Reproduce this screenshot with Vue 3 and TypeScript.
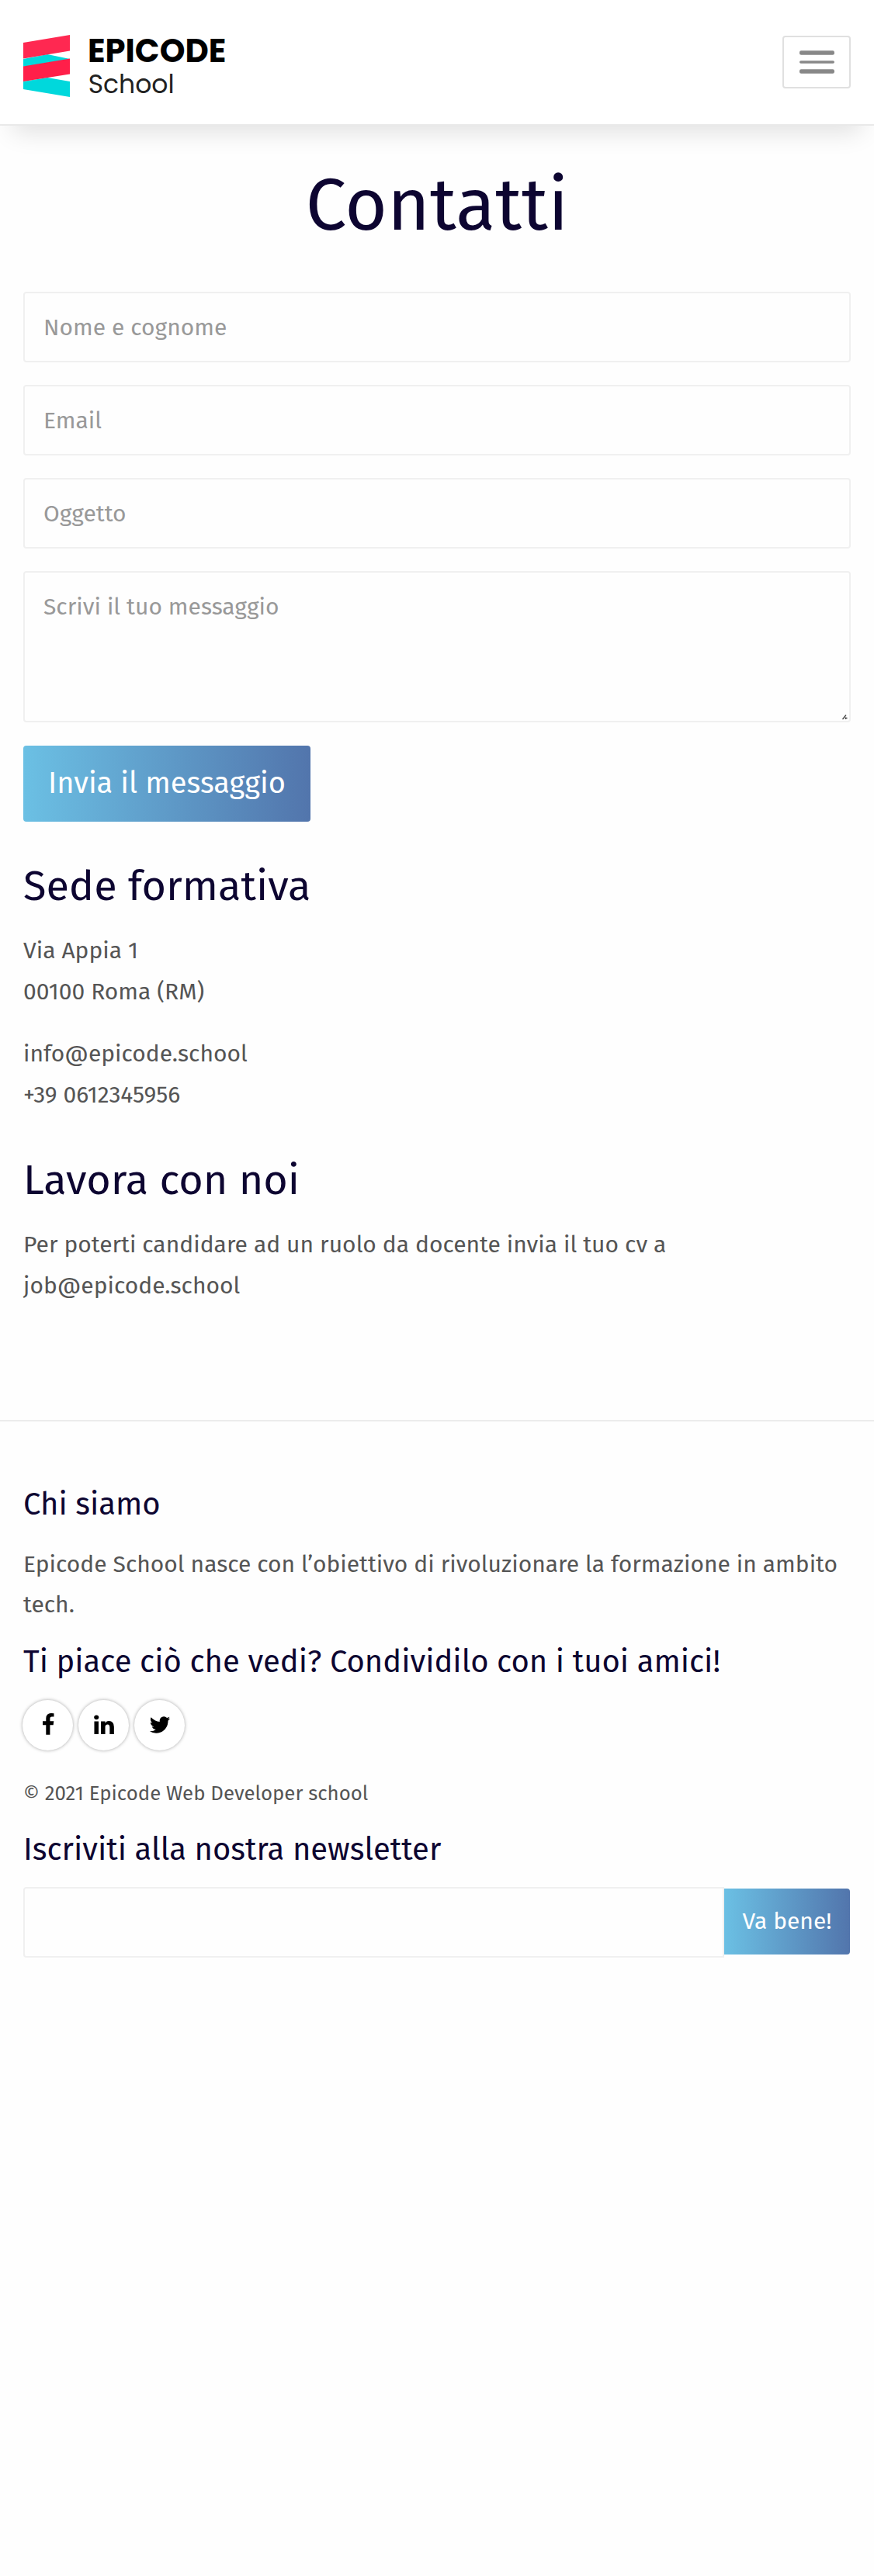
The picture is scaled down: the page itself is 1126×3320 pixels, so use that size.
<script setup lang="ts">
interface Field { name: string; label: string; type: string }
interface Social { name: string; path: string }

const fields: Field[] = [
  { name: 'nome', label: 'Nome e cognome', type: 'text' },
  { name: 'email', label: 'Email', type: 'email' },
  { name: 'oggetto', label: 'Oggetto', type: 'text' },
]

const socials: Social[] = [
  {
    name: 'Facebook',
    path: 'M1343 12v264h-157q-86 0-116 36t-30 108v189h293l-39 296h-254v759h-306v-759h-255v-296h255v-218q0-186 104-288.500t277-102.500q147 0 228 12z',
  },
  {
    name: 'LinkedIn',
    path: 'M477 625v991h-330v-991h330zm21-306q1 73-50.500 122t-135.500 49h-2q-82 0-132-49t-50-122q0-74 51.500-122.500t134.500-48.500 133 48.500 51 122.500zm1166 729v568h-329v-530q0-105-40.500-164.500t-126.500-59.500q-63 0-105.500 34.500t-63.500 85.500q-11 30-11 81v553h-329q2-399 2-647t-1-296l-1-48h329v144h-2q20-32 41-56t56.500-52 87-43.500 114.500-15.500q171 0 275 113.500t104 332.500z',
  },
  {
    name: 'Twitter',
    path: 'M1684 408q-67 98-162 167 1 14 1 42 0 130-38 259.500t-115.500 248.500-184.500 210.500-258 146-323 54.500q-271 0-496-145 35 4 78 4 225 0 401-138-105-2-188-64.500t-114-159.500q33 5 61 5 43 0 85-11-112-23-185.500-111.500t-73.500-205.500v-4q68 38 146 41-66-44-105-115t-39-154q0-88 44-163 121 149 294.500 238.500t371.500 99.500q-8-38-8-74 0-134 94.500-228.500t228.500-94.500q140 0 236 102 109-21 205-78-37 115-142 178 93-10 186-50z',
  },
]
</script>

<template>
  <div class="page">
    <header class="header">
      <a class="brand">
        <svg class="mark" viewBox="0 0 60 80" aria-hidden="true">
          <path d="M0 31 L31 25 L60 31 L60 36 L0 41Z" fill="#00d8dc" />
          <path d="M0 60 L31 55 L60 60 V80 L0 70Z" fill="#00d8dc" />
          <path d="M0 10 L60 0 V20.500 L0 30.500Z" fill="#ff2851" />
          <path d="M0 40.500 L60 30.500 V50.500 L0 60Z" fill="#ff1f49" />
        </svg>
        <span class="wordmark">
          <strong>EPICODE</strong>
          <span>School</span>
        </span>
      </a>
      <button class="toggler" aria-label="Menu">
        <svg width="45" height="30" viewBox="0 0 45 30">
          <rect y="0.300" width="45" height="5.400" rx="2.200" />
          <rect y="13.200" width="45" height="3.600" rx="1.800" />
          <rect y="24.300" width="45" height="5.400" rx="2.200" />
        </svg>
      </button>
    </header>

    <main class="main">
      <h1>Contatti</h1>
      <form class="form">
        <input v-for="f in fields" :key="f.name" class="control" :type="f.type" :name="f.name" :placeholder="f.label" />
        <div class="area-wrap">
          <textarea class="control area" name="messaggio" placeholder="Scrivi il tuo messaggio"></textarea>
          <svg class="grip" width="7" height="7" viewBox="0 0 7 7" aria-hidden="true">
            <path d="M0.500 6 L5 0.500 M4 4.500 H6.500 M4.500 3.500 V6" />
          </svg>
        </div>
        <button class="btn send" type="button">Invia il messaggio</button>
      </form>

      <section class="place">
        <h2>Sede formativa</h2>
        <p>Via Appia 1<br />00100 Roma (RM)</p>
        <p>info@epicode.school<br />+39 0612345956</p>
      </section>
      <section class="jobs">
        <h2>Lavora con noi</h2>
        <p>Per poterti candidare ad un ruolo da docente invia il tuo cv a<br />job@epicode.school</p>
      </section>
    </main>

    <footer class="footer">
      <h5>Chi siamo</h5>
      <p>Epicode School nasce con l’obiettivo di rivoluzionare la formazione in ambito tech.</p>
      <h5 class="share">Ti piace ciò che vedi? Condividilo con i tuoi amici!</h5>
      <div class="socials">
        <a v-for="s in socials" :key="s.name" class="social" :aria-label="s.name">
          <svg width="30" height="30" viewBox="0 0 1792 1792"><path :d="s.path" /></svg>
        </a>
      </div>
      <p class="copy">© 2021 Epicode Web Developer school</p>
      <h5 class="news">Iscriviti alla nostra newsletter</h5>
      <div class="subscribe">
        <input class="control" type="email" aria-label="Email" />
        <button class="btn ok" type="button">Va bene!</button>
      </div>
    </footer>
  </div>
</template>

<style>
body {
  margin: 0;
  background: #fefefe;
}
</style>

<style scoped>
.page,
.page * {
  box-sizing: border-box;
}
.page {
  font-family: "Fira Sans", "Noto Sans", sans-serif;
  font-size: 30px;
  line-height: 52.5px;
  color: #555;
}
h1, h2, h5, p {
  margin: 0;
  font-weight: 400;
}
h1, h2, h5 {
  color: #0d0531;
}
.header {
  height: 162px;
  padding: 0 30px;
  display: flex;
  align-items: center;
  justify-content: space-between;
  background: #fff;
  border-bottom: 2px solid #e9e9e9;
  box-shadow: 0 24px 30px -16px rgba(0, 0, 0, 0.12);
}
.brand {
  display: flex;
  align-items: center;
  padding-top: 10px;
}
.mark {
  width: 60px;
  height: 80px;
  margin-right: 23px;
}
.wordmark {
  display: flex;
  flex-direction: column;
  gap: 3px;
  padding-top: 4px;
  font-family: Poppins, Inter, sans-serif;
  line-height: 40px;
}
.wordmark strong {
  font-size: 41.7px;
  font-weight: 700;
  color: #000;
}
.wordmark span {
  margin-left: 0.7px;
  font-size: 33px;
  color: #222;
}
.toggler {
  width: 88px;
  height: 68px;
  padding: 0;
  display: flex;
  align-items: center;
  justify-content: center;
  background: none;
  border: 2px solid #e0e0e0;
  border-radius: 4px;
}
.toggler svg {
  fill: #888;
}
.main {
  padding: 46.5px 30px 146.6px;
}
h1 {
  font-size: 93.75px;
  line-height: 112.5px;
  text-align: center;
}
.form {
  display: flex;
  flex-direction: column;
  align-items: flex-start;
  gap: 29px;
  margin: 55px 0 50.5px;
}
.control {
  display: block;
  width: 100%;
  height: 91px;
  margin: 0;
  padding: 0 24px;
  border: 2px solid #f0f0f0;
  border-radius: 4px;
  outline: 0;
  background: #fefefe;
  font: inherit;
  color: #555;
}
.control::placeholder {
  color: #999;
  opacity: 1;
}
.area-wrap {
  position: relative;
  width: 100%;
}
.area {
  height: 195px;
  padding: 18px 24px;
  resize: none;
}
.grip {
  position: absolute;
  right: 4px;
  bottom: 3px;
  fill: none;
  stroke: #444;
  stroke-width: 1.3;
}
.btn {
  padding: 0;
  border: 0;
  color: #fff;
  font-family: inherit;
  background: linear-gradient(to right, #6bc0e4, #5275ac);
}
.send {
  width: 370px;
  height: 98px;
  margin-top: 1px;
  padding-bottom: 2px;
  font-size: 38px;
  border-radius: 4px;
}
h2 {
  font-size: 54px;
  line-height: 64.8px;
  margin-bottom: 25px;
}
.place p + p {
  margin-top: 28px;
}
.jobs {
  margin-top: 51.3px;
}
.footer {
  border-top: 2px solid #ececec;
  padding: 82.8px 30px 0;
}
h5 {
  font-size: 40px;
  line-height: 48px;
}
.footer > p {
  margin-top: 27px;
}
.footer > .share {
  margin-top: 23px;
}
.socials {
  display: flex;
  gap: 7px;
  margin: 25.2px 0 0 -0.6px;
}
.social {
  width: 65px;
  height: 65px;
  display: flex;
  align-items: center;
  justify-content: center;
  border-radius: 50%;
  background: #fff;
  box-shadow: 0 0 4px rgba(0, 0, 0, 0.35);
}
.social svg {
  fill: #000;
}
.footer > .copy {
  margin-top: 34.2px;
  font-size: 25.8px;
  line-height: 44.6px;
}
.news {
  margin-top: 25px;
}
.subscribe {
  display: flex;
  align-items: flex-start;
  margin-top: 24.2px;
}
.subscribe .control {
  flex: 1;
  border-radius: 4px 0 0 4px;
}
.ok {
  width: 162px;
  height: 85px;
  margin: 2px 1px 0 0;
  padding-bottom: 1px;
  font-size: 30px;
  border-radius: 0 4px 4px 0;
}
</style>
